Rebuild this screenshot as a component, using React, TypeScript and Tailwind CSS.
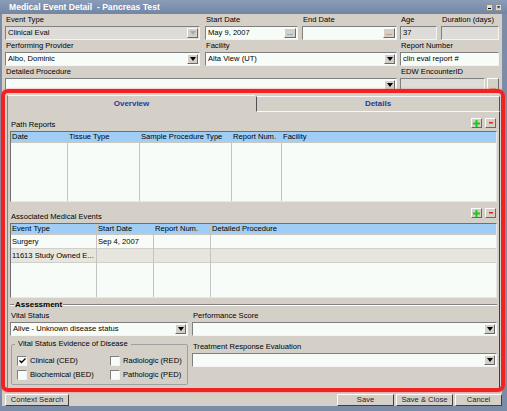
import React from "react";

const sunken = "border border-t-[#7f7f7f] border-l-[#7f7f7f] border-r-[#f4f4f4] border-b-[#f4f4f4]";
const raised = "border border-t-[#fcfcfc] border-l-[#fcfcfc] border-r-[#6a6a6a] border-b-[#6a6a6a]";

function Arrow({ disabled }: { disabled?: boolean }) {
  return (
    <div className={`${raised} bg-[#d4d0c8] w-[11px] h-full flex items-center justify-center shrink-0`}>
      <svg width="6" height="4" viewBox="0 0 6 4">
        <path d="M0 0h6L3 4z" fill={disabled ? "#a8a8a8" : "#000"} />
      </svg>
    </div>
  );
}

function Combo({ value, disabled, className = "" }: { value?: string; disabled?: boolean; className?: string }) {
  return (
    <div className={`${sunken} ${disabled ? "bg-[#dedcd8]" : "bg-[#f8fcf8]"} h-[14px] flex p-[1px] ${className}`}>
      <div className="flex-1 pl-[1px] leading-[10px] truncate">{value}</div>
      <Arrow disabled={disabled} />
    </div>
  );
}

function Dots() {
  return (
    <div className={`${raised} bg-[#d4d0c8] w-[12px] h-full flex items-end justify-center shrink-0 leading-[8px] text-[7px] text-[#333]`}>
      ...
    </div>
  );
}

function TextBox({ value, disabled, dots, className = "" }: { value?: string; disabled?: boolean; dots?: boolean; className?: string }) {
  return (
    <div className={`${sunken} ${disabled ? "bg-[#dedcd8]" : "bg-[#f8fcf8]"} h-[14px] flex p-[1px] ${className}`}>
      <div className="flex-1 pl-[1px] leading-[10px] truncate">{value}</div>
      {dots && <Dots />}
    </div>
  );
}

function Label({ children }: { children: React.ReactNode }) {
  return <div className="h-[12px] leading-[12px] pl-[1px] whitespace-nowrap">{children}</div>;
}

function MiniBtn({ kind }: { kind: "plus" | "minus" }) {
  return (
    <div className={`${raised} bg-[#d4d0c8] w-[11px] h-[10px] flex items-center justify-center`}>
      {kind === "plus" ? (
        <svg width="7" height="7" viewBox="0 0 7 7">
          <path d="M2.5 0h2v2.5H7v2H4.5V7h-2V4.5H0v-2h2.5z" fill="#1ec81e" />
        </svg>
      ) : (
        <svg width="4" height="2" viewBox="0 0 4 2">
          <rect width="4" height="1.5" fill="#e02020" />
        </svg>
      )}
    </div>
  );
}

type Col = { title: string; w: string };

function Table({ cols, rows, className = "" }: { cols: Col[]; rows: { cells: string[]; bg: string }[]; className?: string }) {
  return (
    <div className={`border border-t-[#6f6f6f] border-l-[#6f6f6f] border-r-[#e8e8e8] border-b-[#e8e8e8] bg-[#f8fcf8] flex ${className}`}>
      {cols.map((c, i) => (
        <div key={i} className={`${c.w} flex flex-col ${i < cols.length - 1 ? "border-r border-[#c4c4c4]" : ""}`}>
          <div className="h-[11px] bg-[#9fcdf6] border-b-2 border-[#c8c8c0] leading-[10px] pl-[1px] whitespace-nowrap overflow-hidden">
            {c.title}
          </div>
          {rows.map((r, j) => (
            <div key={j} className={`h-[14px] ${r.bg} border-b border-[#d0d0c8] leading-[13px] pl-[1px] whitespace-nowrap overflow-hidden`}>
              {r.cells[i]}
            </div>
          ))}
          <div className="flex-1" />
        </div>
      ))}
    </div>
  );
}

function Check({ checked, label }: { checked?: boolean; label: string }) {
  return (
    <div className="flex items-center gap-[3px] h-[10px]">
      <div className={`${sunken} bg-[#f8fcf8] w-[10px] h-[10px] flex items-center justify-center`}>
        {checked && (
          <svg width="7" height="6" viewBox="0 0 7 6">
            <path d="M0.5 2.5l2 2 4-4" stroke="#000" strokeWidth="1.4" fill="none" />
          </svg>
        )}
      </div>
      <span className="whitespace-nowrap">{label}</span>
    </div>
  );
}

function Btn({ children, className = "" }: { children: React.ReactNode; className?: string }) {
  return (
    <div className={`border border-t-[#fcfcfc] border-l-[#fcfcfc] border-r-[#404040] border-b-[#404040] bg-[#d4d0c8] h-[12px] flex items-center justify-center leading-[10px] text-[#222] ${className}`}>
      {children}
    </div>
  );
}

export default function App() {
  const pathCols: Col[] = [
    { title: "Date", w: "w-[57px]" },
    { title: "Tissue Type", w: "w-[72px]" },
    { title: "Sample Procedure Type", w: "w-[92px]" },
    { title: "Report Num.", w: "w-[50px]" },
    { title: "Facility", w: "flex-1" },
  ];
  const eventCols: Col[] = [
    { title: "Event Type", w: "w-[86px]" },
    { title: "Start Date", w: "w-[57px]" },
    { title: "Report Num.", w: "w-[57px]" },
    { title: "Detailed Procedure", w: "flex-1" },
  ];

  return (
    <div className="relative w-[507px] h-[411px] bg-[#7a8ca8] flex flex-col font-['Liberation_Sans',Arial,sans-serif] text-[7.6px] text-black overflow-hidden">
      {/* title bar */}
      <div className="h-[14px] flex items-center pl-[9px] pr-[5px] bg-gradient-to-b from-[#8a9cb8] to-[#7286a4]">
        <div className="flex-1 text-white font-bold text-[8.6px] leading-[12px] whitespace-nowrap">
          Medical Event Detail&nbsp; - Pancreas Test
        </div>
        <div className="flex gap-[2px] items-center">
          <div className="w-[7px] h-[7px] bg-[#dcdcdc] border border-[#909090] flex items-end justify-center">
            <div className="w-[3px] h-[1px] bg-black mb-[1px]" />
          </div>
          <div className="w-[7px] h-[7px] bg-[#dcdcdc] border border-[#909090] flex items-center justify-center text-[6px] leading-[6px] font-bold">
            ×
          </div>
        </div>
      </div>

      {/* window body */}
      <div className="flex-1 ml-[2px] mr-[5px] mb-[5px] bg-[#d4d0c8] flex flex-col">
        {/* row 1 */}
        <div className="flex pl-[3px]">
          <div className="w-[195px]">
            <Label>Event Type</Label>
            <Combo value="Clinical Eval" disabled />
          </div>
          <div className="w-[93px] ml-[5px]">
            <Label>Start Date</Label>
            <TextBox value="May 9, 2007" dots />
          </div>
          <div className="w-[95px] ml-[4px]">
            <Label>End Date</Label>
            <TextBox dots />
          </div>
          <div className="w-[37px] ml-[3px]">
            <Label>Age</Label>
            <TextBox value="37" disabled />
          </div>
          <div className="w-[58px] ml-[4px]">
            <Label>Duration (days)</Label>
            <TextBox disabled />
          </div>
        </div>
        {/* row 2 */}
        <div className="flex pl-[3px]">
          <div className="w-[195px]">
            <Label>Performing Provider</Label>
            <Combo value="Albo, Dominic" />
          </div>
          <div className="w-[192px] ml-[5px]">
            <Label>Facility</Label>
            <Combo value="Alta View (UT)" />
          </div>
          <div className="w-[99px] ml-[3px]">
            <Label>Report Number</Label>
            <TextBox value="clin eval report #" />
          </div>
        </div>
        {/* row 3 */}
        <div className="flex pl-[3px]">
          <div className="w-[392px]">
            <Label>Detailed Procedure</Label>
            <Combo />
          </div>
          <div className="w-[85px] ml-[3px]">
            <Label>EDW EncounterID</Label>
            <TextBox disabled />
          </div>
          <div className="w-[12px] ml-[2px] pt-[12px]">
            <div className="h-[14px]">
              <Dots />
            </div>
          </div>
        </div>

        {/* tabs */}
        <div className="mt-[3px] ml-[5px] w-[493px] flex h-[17px] font-bold text-[#1c3c9c] text-[8px]">
          <div className="w-[248px] border-l border-t border-l-[#808080] border-t-[#f4f4f4] flex items-center justify-center">
            Overview
          </div>
          <div className="flex-1 border border-t-[#f8f8f8] border-l-[#505050] border-r-[#505050] border-b-[#f8f8f8] ml-[1px] mt-[1px] flex items-center justify-center">
            Details
          </div>
        </div>

        {/* tab content */}
        <div className="ml-[5px] w-[493px] h-[278px] border-l border-r border-b border-l-[#808080] border-r-[#404040] border-b-[#404040] flex flex-col px-[2px]">
          <div className="h-[19px] flex items-end justify-between pb-[1px]">
            <div className="pl-[1px] leading-[10px]">Path Reports</div>
            <div className="flex gap-[3px] self-start mt-[6px] pr-[1px]">
              <MiniBtn kind="plus" />
              <MiniBtn kind="minus" />
            </div>
          </div>
          <Table cols={pathCols} rows={[]} className="h-[71px]" />

          <div className="h-[21px] flex items-end justify-between pb-[1px]">
            <div className="pl-[1px] leading-[10px]">Associated Medical Events</div>
            <div className="flex gap-[3px] self-start mt-[6px] pr-[1px]">
              <MiniBtn kind="plus" />
              <MiniBtn kind="minus" />
            </div>
          </div>
          <Table
            cols={eventCols}
            rows={[
              { cells: ["Surgery", "Sep 4, 2007", "", ""], bg: "bg-[#f8fcf8]" },
              { cells: ["11613 Study Owned E...", "", "", ""], bg: "bg-[#e6e6de]" },
            ]}
            className="h-[75px]"
          />

          {/* assessment */}
          <div className="flex items-center h-[10px] mt-[2px]">
            <div className="w-[4px] border-t border-b border-t-[#808080] border-b-white" />
            <div className="px-[1px] font-bold text-[8px] leading-[10px]">Assessment</div>
            <div className="flex-1 border-t border-b border-t-[#808080] border-b-white" />
          </div>
          <div className="flex gap-[4px]">
            <div className="w-[178px] flex flex-col">
              <Label>Vital Status</Label>
              <Combo value="Alive - Unknown disease status" className="h-[13px]" />
              <div className="mt-[8px] h-[41px] border border-[#a0a0a0] rounded-[2px] relative ml-[1px] flex flex-col gap-[4px] pt-[11px] pl-[5px]">
                <div className="absolute -top-[6px] left-[3px] px-[3px] bg-[#d4d0c8] leading-[10px]">
                  Vital Status Evidence of Disease
                </div>
                <div className="flex">
                  <div className="w-[93px]"><Check checked label="Clinical (CED)" /></div>
                  <Check label="Radiologic (RED)" />
                </div>
                <div className="flex">
                  <div className="w-[93px]"><Check label="Biochemical (BED)" /></div>
                  <Check label="Pathologic (PED)" />
                </div>
              </div>
            </div>
            <div className="flex-1 flex flex-col">
              <Label>Performance Score</Label>
              <Combo className="h-[13px]" />
              <div className="mt-[5px]" />
              <Label>Treatment Response Evaluation</Label>
              <Combo className="h-[13px]" />
            </div>
          </div>
        </div>

        {/* bottom buttons */}
        <div className="flex mt-[4px] pl-[3px] pr-[0px]">
          <Btn className="w-[64px]">Context Search</Btn>
          <div className="flex-1" />
          <Btn className="w-[57px]">Save</Btn>
          <Btn className="w-[57px] ml-[2px]">Save &amp; Close</Btn>
          <Btn className="w-[47px] ml-[2px]">Cancel</Btn>
        </div>
      </div>

      {/* red highlight annotation */}
      <div className="absolute left-[1px] top-[89px] w-[504px] h-[303px] border-[4px] border-[#f02222] rounded-[7px] shadow-[0_0_2px_#ff6060] pointer-events-none" />
    </div>
  );
}
